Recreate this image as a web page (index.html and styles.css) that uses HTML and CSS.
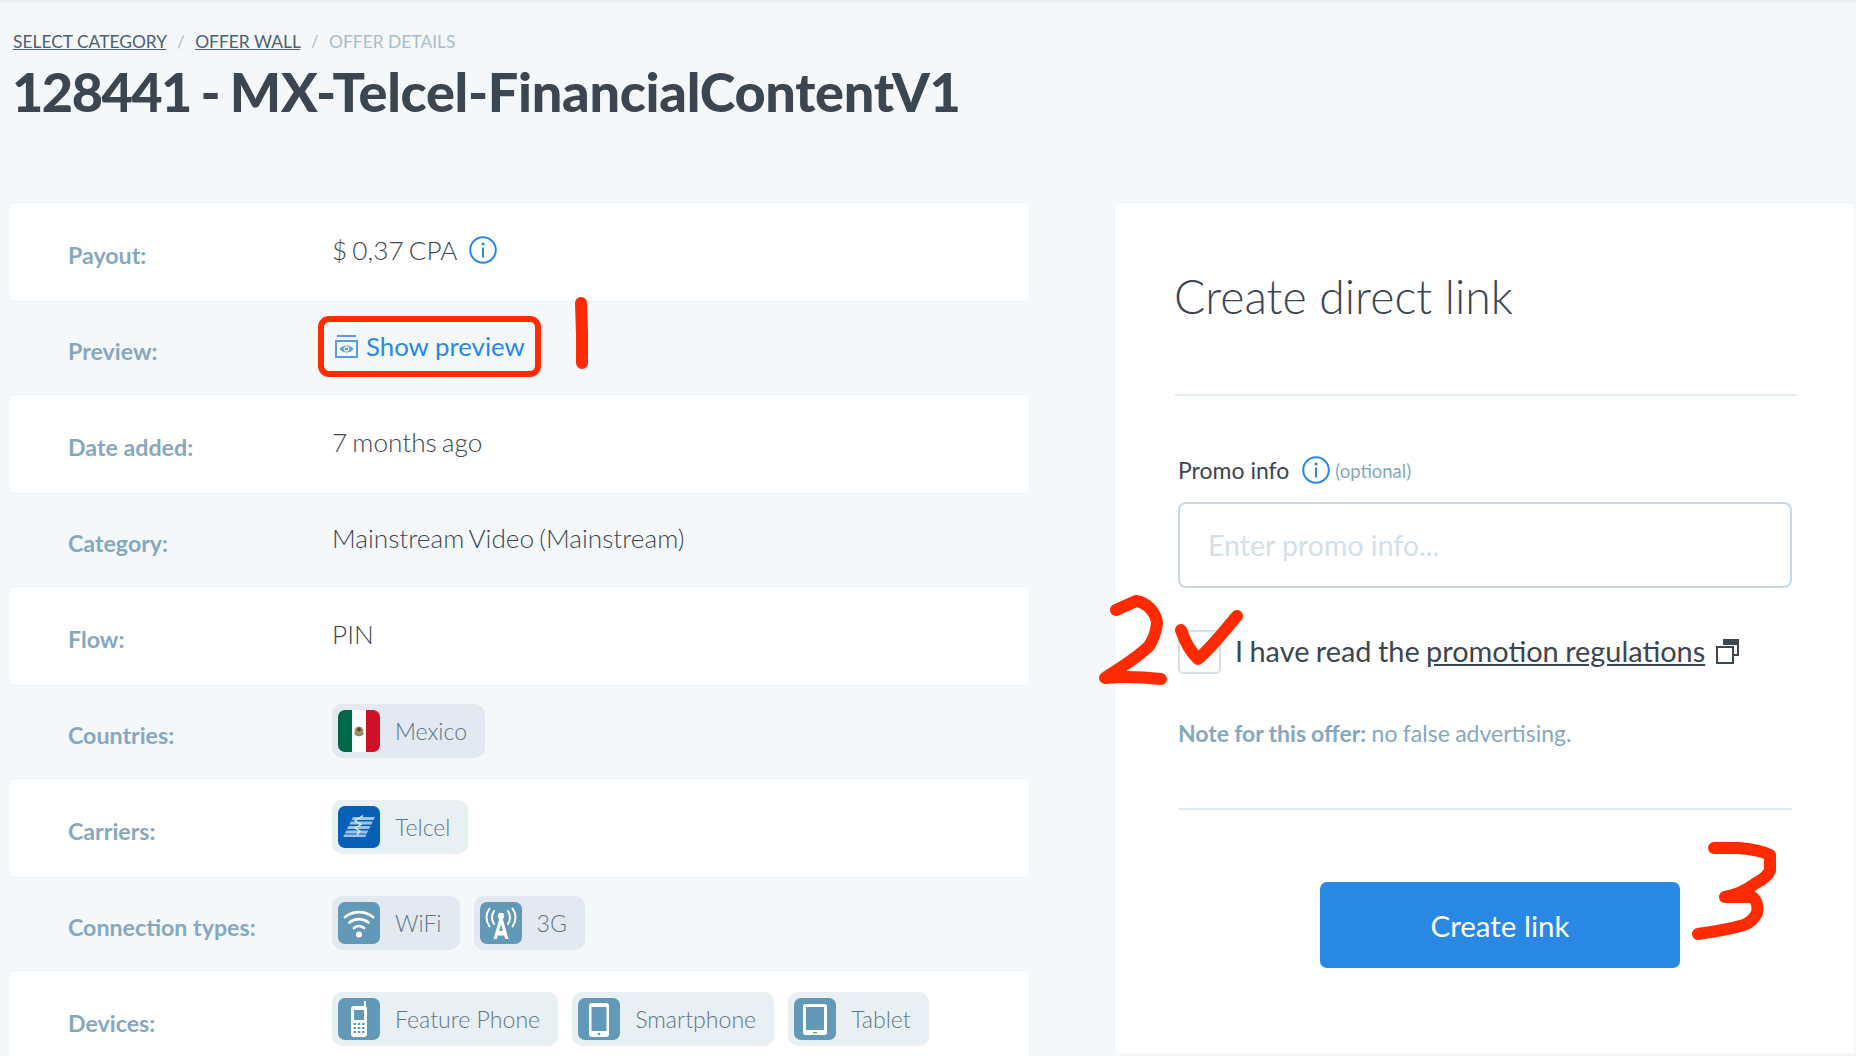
FILE: index.html
```html
<!DOCTYPE html>
<html lang="en">
<head>
    <meta charset="UTF-8">
    <title>128441 - MX-Telcel-FinancialContentV1</title>
    <link rel="stylesheet" href="styles.css">
</head>
<body>
    <div class="page">
        <div class="crumbs">
            <a href="#">Select category</a>
            <span class="sep">/</span>
            <a href="#">Offer wall</a>
            <span class="sep">/</span>
            <span class="current">Offer details</span>
        </div>
        <h1><span class="offer-id">128441</span> - MX-Telcel-FinancialContentV1</h1>

        <div class="columns">
            <div class="details">
                <div class="row">
                    <div class="label">Payout:</div>
                    <div class="value">$ 0,37 CPA
                        <svg class="info" viewBox="0 0 28 28"><circle cx="14" cy="14" r="12.8" fill="none" stroke="#2888e4" stroke-width="2"/><circle cx="14" cy="8" r="1.6" fill="#2888e4"/><rect x="13" y="11.5" width="2" height="10" fill="#2888e4"/></svg>
                    </div>
                </div>
                <div class="row">
                    <div class="label">Preview:</div>
                    <div class="value">
                        <a class="preview" href="#">
                            <svg class="eye" viewBox="0 0 23 23"><rect x="2" y="0" width="19" height="2" fill="#5b9be3"/><rect x="1" y="6" width="21" height="16" fill="none" stroke="#5b9be3" stroke-width="2"/><path d="M4.500 14c3.800-4.800 10.200-4.800 14 0c-3.800 4.800-10.200 4.800-14 0z" fill="#5b9be3"/><circle cx="11.500" cy="14" r="2.800" fill="#f4f8fb"/><circle cx="11.500" cy="14" r="1.600" fill="#5b9be3"/></svg>
                            Show preview
                        </a>
                    </div>
                </div>
                <div class="row">
                    <div class="label">Date added:</div>
                    <div class="value">7 months ago</div>
                </div>
                <div class="row">
                    <div class="label">Category:</div>
                    <div class="value">Mainstream Video (Mainstream)</div>
                </div>
                <div class="row">
                    <div class="label">Flow:</div>
                    <div class="value">PIN</div>
                </div>
                <div class="row">
                    <div class="label">Countries:</div>
                    <div class="chips">
                        <span class="chip">
                            <svg class="chip-icon" viewBox="0 0 42 42"><rect width="14" height="42" fill="#006847"/><rect x="14" width="14" height="42" fill="#fff"/><rect x="28" width="14" height="42" fill="#ce1126"/><ellipse cx="21" cy="21" rx="4.500" ry="4.500" fill="#a88d62"/><circle cx="21" cy="19.500" r="2" fill="#5c4326"/><path d="M16.500 23c2 3.500 7 3.500 9 0" fill="none" stroke="#5d9169" stroke-width="1.200"/></svg>
                            Mexico
                        </span>
                    </div>
                </div>
                <div class="row">
                    <div class="label">Carriers:</div>
                    <div class="chips">
                        <span class="chip">
                            <svg class="chip-icon" viewBox="0 0 42 42"><rect width="42" height="42" fill="#0560b6"/><path d="M15 11h22l-1.500 3h-22zM12.800 15.500h22l-1.500 3h-22zM10.500 20h22l-1.500 3H9zM8.300 24.500h22l-1.500 3h-22zM6.500 28.500h22l-1.200 2.500H5.200z" fill="#9fc3e6"/><path d="M25 9.500l-8 5.500l6 3.500l-6 3.500l5 3l-3 4" fill="none" stroke="#e6f0fa" stroke-width="1.300"/></svg>
                            Telcel
                        </span>
                    </div>
                </div>
                <div class="row">
                    <div class="label">Connection types:</div>
                    <div class="chips">
                        <span class="chip">
                            <svg class="chip-icon" viewBox="0 0 42 42"><rect width="42" height="42" fill="#6298b8"/><g fill="none" stroke="#fff" stroke-width="2.800" stroke-linecap="round"><path d="M7 15c8-6.500 20-6.500 28 0"/><path d="M11.500 20.500c5.500-4.500 13.500-4.500 19 0"/><path d="M16 26c3-2.500 7-2.500 10 0"/></g><circle cx="21" cy="32.500" r="3" fill="#fff"/></svg>
                            WiFi
                        </span>
                        <span class="chip">
                            <svg class="chip-icon" viewBox="0 0 42 42"><rect width="42" height="42" fill="#6298b8"/><g fill="none" stroke="#fff" stroke-width="2" stroke-linecap="round"><path d="M14 9c-2.500 4-2.500 9 0 13"/><path d="M9.500 6.500c-4 5.500-4 12.500 0 18"/><path d="M28 9c2.500 4 2.500 9 0 13"/><path d="M32.500 6.500c4 5.500 4 12.500 0 18"/></g><circle cx="21" cy="14" r="3.200" fill="#fff"/><path d="M19.500 16h3l6 21h-3.200l-1-3.500h-6.600l-1 3.500h-3.200zM21 22l-1.700 7h3.400z" fill="#fff" fill-rule="evenodd"/></svg>
                            3G
                        </span>
                    </div>
                </div>
                <div class="row">
                    <div class="label">Devices:</div>
                    <div class="chips">
                        <span class="chip">
                            <svg class="chip-icon" viewBox="0 0 42 42"><rect width="42" height="42" fill="#6298b8"/><rect x="26" y="3" width="2" height="7" fill="#fff"/><rect x="13" y="8" width="16" height="31" rx="3" fill="#fff"/><rect x="16" y="12" width="10" height="10" fill="#6298b8"/><g fill="#6298b8"><rect x="15.500" y="25" width="2.500" height="2"/><rect x="19.800" y="25" width="2.500" height="2"/><rect x="24" y="25" width="2.500" height="2"/><rect x="15.500" y="29" width="2.500" height="2"/><rect x="19.800" y="29" width="2.500" height="2"/><rect x="24" y="29" width="2.500" height="2"/><rect x="15.500" y="33" width="2.500" height="2"/><rect x="19.800" y="33" width="2.500" height="2"/><rect x="24" y="33" width="2.500" height="2"/></g></svg>
                            Feature Phone
                        </span>
                        <span class="chip">
                            <svg class="chip-icon" viewBox="0 0 42 42"><rect width="42" height="42" fill="#6298b8"/><rect x="11" y="5" width="20" height="34" rx="3" fill="#fff"/><rect x="13.500" y="9" width="15" height="24" fill="#6298b8"/><circle cx="21" cy="36" r="1.300" fill="#6298b8"/></svg>
                            Smartphone
                        </span>
                        <span class="chip">
                            <svg class="chip-icon" viewBox="0 0 42 42"><rect width="42" height="42" fill="#6298b8"/><rect x="9" y="6" width="24" height="31" rx="2.500" fill="#fff"/><rect x="12" y="9" width="18" height="23" fill="#6298b8"/><rect x="19" y="34" width="4" height="1.300" fill="#6298b8"/></svg>
                            Tablet
                        </span>
                    </div>
                </div>
            </div>

            <div class="card">
                <h2>Create direct link</h2>
                <div class="form">
                    <div class="promo-label">Promo info
                        <svg class="info" viewBox="0 0 28 28"><circle cx="14" cy="14" r="12.800" fill="none" stroke="#2888e4" stroke-width="2"/><circle cx="14" cy="8" r="1.600" fill="#2888e4"/><rect x="13" y="11.500" width="2" height="10" fill="#2888e4"/></svg>
                        <span class="optional">(optional)</span>
                    </div>
                    <input class="promo-input" type="text" placeholder="Enter promo info...">
                    <div class="agree">
                        <span class="checkbox"></span>
                        <span>I have read the <a href="#">promotion regulations</a></span>
                        <svg class="window" viewBox="0 0 23 25"><path d="M7 1h15v15h-5" fill="none" stroke="#3c4650" stroke-width="2"/><rect x="7" y="1" width="15" height="5" fill="#3c4650"/><rect x="1" y="8" width="16" height="16" fill="none" stroke="#3c4650" stroke-width="2"/></svg>
                    </div>
                    <div class="note"><b>Note for this offer:</b> no false advertising.</div>
                    <div class="actions">
                        <button class="create">Create link</button>
                    </div>
                </div>
            </div>
        </div>
    </div>

    <svg class="marks" viewBox="0 0 1856 1056">
        <rect x="321" y="319" width="217" height="55" rx="8"/>
        <path d="M581 303l1 30v30"/>
        <path d="M1116 610l20-9c12 2 20 12 21 22c-1 10-3 15-8 23c-12 12-32 24-44 32c20-2 38-1 56 1"/>
        <path d="M1181 630c4 12 10 22 17 29c14-12 26-28 39-43"/>
        <path d="M1714 848h24c14 1 24 3 32 7v15c-2 6-8 10-14 13c-8 6-20 12-31 14h27c5 3 6 10 5 16c-3 6-8 10-13 12c-14 4-32 7-46 9"/>
    </svg>
</body>
</html>
```

FILE: styles.css
```css
html, body {
    margin: 0;
    padding: 0;
    height: 1056px;
    overflow: hidden;
}
body {
    font-family: Lato, "Open Sans", sans-serif;
    background-color: #f4f8fb;
    color: #3c4650;
    position: relative;
}
.page {
    padding: 31px 0 0 10px;
    background: linear-gradient(#ecf0f3, #f4f8fb 4px) no-repeat;
}
.crumbs {
    padding-left: 3px;
    font-size: 17.4px;
    line-height: 22px;
    text-transform: uppercase;
    color: #a9bdcc;
}
.crumbs a {
    color: #4e5f6e;
}
.crumbs .sep {
    margin: 0 6px;
}
h1 {
    margin: 8px 0 0 2px;
    font-size: 54px;
    line-height: 62px;
    font-weight: 900;
    letter-spacing: -0.3px;
    word-spacing: -3px;
    color: #3c4650;
}
.offer-id {
    letter-spacing: -1.5px;
}
.columns {
    display: flex;
    margin-top: 81px;
    gap: 88px;
}
.details {
    width: 1018px;
    flex: none;
}
.row {
    display: flex;
    height: 96px;
    background-color: #f4f8fb;
    box-sizing: border-box;
    padding-left: 58px;
}
.row:nth-child(odd) {
    background-color: #fff;
}
.label {
    width: 264px;
    flex: none;
    padding-top: 36px;
    font-size: 23.2px;
    line-height: 30px;
    font-weight: 700;
    color: #86a8bf;
}
.value {
    padding-top: 28px;
    font-size: 26.2px;
    word-spacing: -2px;
    line-height: 36px;
    font-weight: 300;
    display: flex;
    align-items: center;
    align-self: flex-start;
    gap: 12px;
}
.info {
    width: 28px;
    height: 28px;
    flex: none;
}
.preview {
    display: flex;
    align-items: center;
    gap: 8px;
    margin-left: 3px;
    color: #2888e4;
    font-size: 25.8px;
    font-weight: 400;
    word-spacing: 0;
    text-decoration: none;
}
.eye {
    width: 23px;
    height: 23px;
    flex: none;
}
.chips {
    display: flex;
    gap: 14px;
    padding-top: 20px;
    align-self: flex-start;
}
.chip {
    display: flex;
    align-items: center;
    gap: 15px;
    height: 54px;
    padding: 0 18px 0 6px;
    border-radius: 10px;
    background-color: #e2e9f0;
    color: #5f7689;
    font-size: 23.1px;
    font-weight: 300;
}
.row:nth-child(odd) .chip {
    background-color: #e9f0f4;
}
.chip-icon {
    width: 42px;
    height: 42px;
    border-radius: 7px;
    flex: none;
}
.card {
    width: 738px;
    flex: none;
    height: 849px;
    background-color: #fff;
    padding: 0 58px 0 59px;
    box-sizing: border-box;
}
h2 {
    margin: 0;
    height: 192px;
    padding-top: 63px;
    box-sizing: border-box;
    border-bottom: 2px solid #e2e9f0;
    font-size: 46.4px;
    line-height: 58px;
    font-weight: 300;
    text-indent: -1px;
    color: #3c4650;
}
.form {
    padding: 0 4px 0 3px;
}
.promo-label {
    display: flex;
    align-items: center;
    margin-top: 58px;
    height: 32px;
    font-size: 23px;
    color: #3c4650;
}
.promo-label .info {
    margin: 0 5px 0 13px;
}
.optional {
    font-size: 18.500px;
    font-weight: 400;
    color: #86a8bf;
    padding-top: 2px;
}
.promo-input {
    display: block;
    width: 100%;
    height: 86px;
    margin-top: 16px;
    padding: 0 28px;
    box-sizing: border-box;
    border: 2px solid #c9d8e5;
    border-radius: 8px;
    font-family: Lato, sans-serif;
    font-size: 28.500px;
    background: #fff;
}
.promo-input::placeholder {
    color: #d5dfe7;
    opacity: 1;
}
.agree {
    display: flex;
    align-items: center;
    margin-top: 41px;
    font-size: 28.900px;
    line-height: 44px;
    word-spacing: -1px;
}
.agree a {
    color: #3c4650;
}
.checkbox {
    width: 43px;
    height: 44px;
    box-sizing: border-box;
    border: 2px solid #d5e0e9;
    border-radius: 5px;
    margin: 1px 14px -1px 0;
    flex: none;
}
.window {
    width: 23px;
    height: 25px;
    margin-left: 11px;
}
.note {
    margin-top: 45px;
    padding-bottom: 60px;
    border-bottom: 2px solid #e2e9f0;
    font-size: 23px;
    line-height: 30px;
    word-spacing: -0.5px;
    color: #86a8bf;
    font-weight: 400;
}
.actions {
    display: flex;
    margin-top: 72px;
    padding-left: 142px;
}
.create {
    width: 360px;
    height: 86px;
    border: none;
    border-radius: 7px;
    background-color: #2888e4;
    color: #fff;
    font-family: Lato, sans-serif;
    font-size: 29.500px;
    cursor: pointer;
}
.marks {
    position: absolute;
    left: 0;
    top: 0;
    width: 1856px;
    height: 1056px;
    fill: none;
    stroke: #ff2a00;
    stroke-width: 6;
    stroke-linecap: round;
    stroke-linejoin: round;
    pointer-events: none;
}
.marks path {
    stroke-width: 12;
}
```
